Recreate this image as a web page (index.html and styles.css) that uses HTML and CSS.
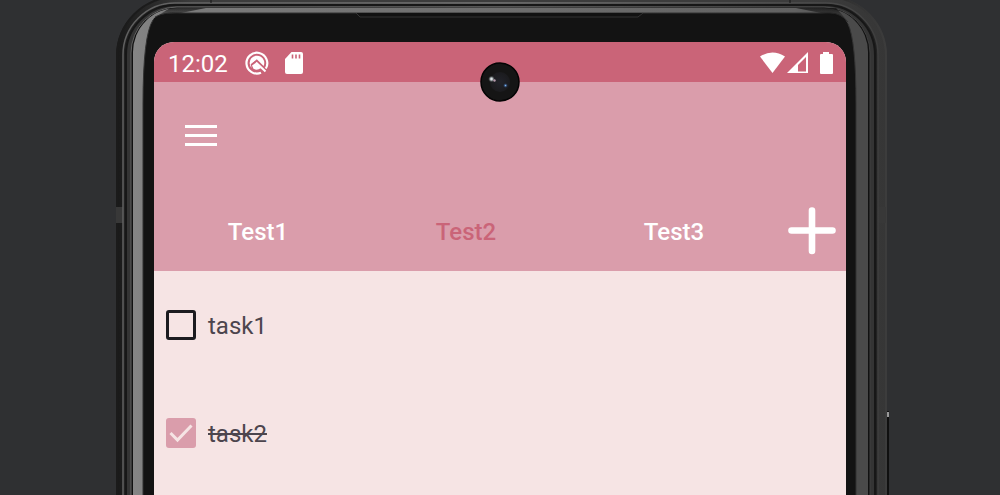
FILE: index.html
```
<!DOCTYPE html>
<html lang="en">
<head>
<meta charset="utf-8">
<meta name="viewport" content="width=device-width, initial-scale=1">
<title>Tasks</title>
<link rel="stylesheet" href="styles.css">
</head>
<body>
<main class="phone">
  <svg class="frame" viewBox="0 0 774 495" preserveAspectRatio="none" aria-hidden="true">
    <defs>
      <linearGradient id="band"><stop offset="0" stop-color="#858585"/><stop offset=".05" stop-color="#7c7c7c"/><stop offset=".5" stop-color="#6e6e6e"/><stop offset=".9" stop-color="#626262"/><stop offset=".97" stop-color="#4a4a4a"/></linearGradient>
      <linearGradient id="edge"><stop offset="0" stop-color="#606060"/><stop offset=".5" stop-color="#777"/><stop offset=".95" stop-color="#484848"/><stop offset="1" stop-color="#3e3e3e"/></linearGradient>
      <linearGradient id="shell"><stop offset="0" stop-color="#191919"/><stop offset=".1" stop-color="#3c3c3c"/><stop offset=".9" stop-color="#3c3c3c"/><stop offset="1" stop-color="#363636"/></linearGradient>
      <linearGradient id="rim"><stop offset="0" stop-color="#1b1b1b"/><stop offset=".9" stop-color="#262626"/><stop offset="1" stop-color="#3c3c3c"/></linearGradient>
      <linearGradient id="shade" x1="0" y1="0" x2="0" y2="1"><stop offset="0" stop-color="#111" stop-opacity=".75"/><stop offset="1" stop-color="#111" stop-opacity="0"/></linearGradient>
    </defs>
    <path d="M769 411h4v90h-4z" fill="#101010"/>
    <path d="M770 412h3v5h-3z" fill="#999"/>
    <rect x="0" y="-4" width="771" height="600" rx="60" fill="url(#shell)"/>
    <rect x="1" y="-3" width="769" height="600" rx="59" fill="none" stroke="url(#rim)" stroke-width="2"/>
    <path d="M0 207h7v16H0zM762 207h8v16h-8z" fill="#383838"/>
    <rect x="7" y="3" width="755" height="600" rx="52" fill="#222" stroke="url(#edge)" stroke-width="1.5"/>
    <rect x="10" y="5" width="749" height="600" rx="50" fill="#343434" stroke="#171717" stroke-width="2"/>
    <rect x="15" y="7" width="739" height="600" rx="46" fill="#111" stroke="url(#edge)" stroke-width="1"/>
    <rect x="17" y="8" width="735" height="600" rx="44" fill="url(#band)"/>
    <path d="M27 501V104Q27 35 37 20Q40 13 62 13H714Q727 13 732 24Q740 40 740 104V501z" fill="#131313"/>
    <path d="M27 501V104Q27 35 37 20M732 24Q740 40 740 104V501" fill="none" stroke="#333"/>
    <path d="M39 17Q48 12 62 13H714Q725 13 732 22" fill="none" stroke="#333"/>
    <path d="M38 18L54 8H90L60 14zM732 21L720 8H680L710 14z" fill="url(#shade)"/>
    <path d="M240 13l4 4H522l5-4" fill="#111" stroke="#333"/>
    <path d="M95 0v3M674 0v3" stroke="#151515"/>
  </svg>
  <section class="screen">
    <header class="status">
      <span class="time">12:02</span>
      <svg class="debug" width="24" height="24" viewBox="0 0 24 24" fill="none" stroke="#fff" aria-hidden="true">
        <path d="M16 21.700A10.400 10.400 0 1 1 20.800 17.500" stroke-width="2.200"/>
        <path d="M6.700 17A7.300 7.300 0 1 1 18.600 15L11.800 8.300L5.600 13.500z" fill="#fff" stroke="none"/>
        <path d="M6.800 13.200L10.600 10.500L18.200 17.500" stroke="#ca6478" stroke-width="1.200"/>
        <path d="M7 14.500L10.500 12L16 17Q12 20 8.500 17.800z" fill="#fff" stroke="none"/>
        <path d="M11 11.500L20.500 20.500" stroke-width="2"/>
      </svg>
      <svg class="card" width="18" height="22" viewBox="0 0 18 22" aria-hidden="true"><path fill="#fff" d="M6.500 0H16q2 0 2 2V20q0 2-2 2H2q-2 0-2-2V7z"/><path d="M7.500 2.500v4M11 2.500v4M14.500 2.500v4" stroke="#ca6478" stroke-width="1.600"/></svg>
      <svg class="signals" width="74" height="22" viewBox="0 0 74 22" fill="#fff" aria-hidden="true">
        <path d="M0 4.500Q12.500-3.500 25 4.500L12.500 21z"/>
        <path fill-rule="evenodd" d="M48 0V21H27zM46 5L38 13V19.500H46z"/>
        <path d="M63 2V0h6v2h3q1 0 1 1V21q0 1-1 1H61q-1 0-1-1V3q0-1 1-1z"/>
      </svg>
    </header>
    <div class="toolbar">
      <button class="menu" type="button" aria-label="Menu"><svg width="32" height="24" viewBox="0 0 32 24" aria-hidden="true"><path d="M0 2.500H32M0 11.500H32M0 20.500H32" stroke="#fff" stroke-width="3.200"/></svg></button>
    </div>
    <nav class="tabs" aria-label="Lists">
      <button class="tab" type="button">Test1</button>
      <button class="tab active" type="button">Test2</button>
      <button class="tab" type="button">Test3</button>
      <button class="add" type="button" aria-label="Add list"><svg width="48" height="48" viewBox="0 0 48 48" aria-hidden="true"><path d="M24 3.500V44M3.500 23.500H44.500" stroke="#fff" stroke-width="6.600" stroke-linecap="round"/></svg></button>
    </nav>
    <ul class="tasks">
      <li><label class="task"><input type="checkbox"><span>task1</span></label></li>
      <li><label class="task"><input type="checkbox" checked><span>task2</span></label></li>
    </ul>
    <svg class="camera" width="40" height="40" viewBox="0 0 40 40" aria-hidden="true">
      <defs><radialGradient id="lens"><stop offset="0" stop-color="#22232a"/><stop offset="1" stop-color="#1b1b1e"/></radialGradient><radialGradient id="glow"><stop offset="0" stop-color="#fff"/><stop offset=".4" stop-color="#a7b1b4"/><stop offset="1" stop-color="#333" stop-opacity="0"/></radialGradient><radialGradient id="blue"><stop offset="0" stop-color="#79b6f5"/><stop offset="1" stop-color="#203a70" stop-opacity="0"/></radialGradient></defs>
      <circle cx="20" cy="20" r="19" fill="#151515" stroke="#030303" stroke-width="1.500"/>
      <circle cx="20" cy="20" r="10" fill="url(#lens)"/>
      <circle cx="11.500" cy="17" r="3.500" fill="url(#glow)"/>
      <circle cx="14.500" cy="18.500" r="1.200" fill="#b59aac"/>
      <circle cx="25.500" cy="23.500" r="2.500" fill="url(#blue)"/>
    </svg>
  </section>
</main>
</body>
</html>
```
FILE: styles.css
```
* {
  box-sizing: border-box;
}

body {
  margin: 0;
  background: #2f3032;
  font-family: Roboto, "Noto Sans", sans-serif;
  font-size: 24px;
  line-height: 28px;
  color: #4c454d;
}

button {
  padding: 0;
  border: 0;
  background: none;
  color: #fff;
  font: inherit;
  cursor: pointer;
}

svg {
  display: block;
}

.phone {
  position: relative;
  display: flex;
  width: 77.4%;
  min-height: 100vh;
  margin-left: 11.6%;
  padding: 42px 44px 0 38px;
  overflow: hidden;
}

.frame {
  position: absolute;
  inset: 0;
  width: 100%;
  height: 100%;
}

.screen {
  position: relative;
  flex: 1;
  border-radius: 20px 20px 0 0;
  background: #f6e4e4;
}

.status {
  display: flex;
  align-items: center;
  height: 40px;
  padding: 1px 12px 0 14px;
  border-radius: 20px 20px 0 0;
  background: #ca6478;
  color: #fff;
}

.time {
  padding-top: 2px;
}

.debug {
  margin-left: 17px;
}

.card {
  margin-left: 16px;
}

.signals {
  margin-left: auto;
}

.toolbar {
  height: 108px;
  padding: 42px 31px;
  background: #da9dab;
}

.tabs {
  display: grid;
  grid-template-columns: repeat(3, 1fr) 68px;
  height: 81px;
  background: #da9dab;
}

.tab {
  padding-top: 2px;
  font-weight: 500;
}

.active {
  color: #ca6478;
}

.add {
  display: grid;
  place-items: center;
}

.tasks {
  margin: 0;
  padding: 0;
  list-style: none;
}

.task {
  display: flex;
  align-items: center;
  gap: 12px;
  height: 108px;
  padding: 0 12px;
}

.task input {
  appearance: none;
  width: 30px;
  height: 30px;
  margin: 0;
  border: 3px solid #1c1b1f;
  border-radius: 3px;
}

.task input:checked {
  border: 0;
  background: #da9dab url("data:image/svg+xml,%3Csvg xmlns='http://www.w3.org/2000/svg' viewBox='0 0 30 30'%3E%3Cpath d='M4.500 15L11.500 22L25.500 7.500' fill='none' stroke='%23f6e4e4' stroke-width='3'/%3E%3C/svg%3E");
}

.task span {
  padding-top: 2px;
}

.task input:checked + span {
  text-decoration: line-through;
}

.camera {
  position: absolute;
  top: 20px;
  left: 50%;
  transform: translateX(-50%);
}
```
